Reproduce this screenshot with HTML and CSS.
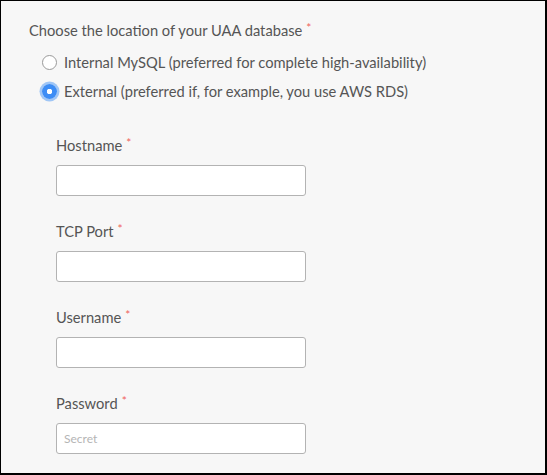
FILE: index.html
```html
<!DOCTYPE html>
<html>
<head>
<meta charset="utf-8">
<link rel="stylesheet" href="styles.css">
</head>
<body>
<div class="frame">
  <div class="group-label">Choose the location of your UAA database<span class="req">*</span></div>
  <div class="radios">
    <label class="radio"><span class="dot"></span><span>Internal MySQL (preferred for complete high-availability)</span></label>
    <label class="radio"><span class="dot checked"></span><span>External (preferred if, for example, you use AWS RDS)</span></label>
  </div>
  <div class="fields">
    <div class="field">
      <div class="label">Hostname<span class="req">*</span></div>
      <div class="input"></div>
    </div>
    <div class="field">
      <div class="label">TCP Port<span class="req">*</span></div>
      <div class="input"></div>
    </div>
    <div class="field">
      <div class="label">Username<span class="req">*</span></div>
      <div class="input"></div>
    </div>
    <div class="field">
      <div class="label">Password<span class="req">*</span></div>
      <div class="input"><span class="placeholder">Secret</span></div>
    </div>
  </div>
</div>
</body>
</html>
```
FILE: styles.css
```css
html, body {
  margin: 0;
  padding: 0;
}
body {
  width: 547px;
  height: 475px;
  font-family: "Lato", "Open Sans", sans-serif;
  color: #555;
}
.frame {
  box-sizing: border-box;
  width: 547px;
  height: 475px;
  background: #f7f7f7;
  border-style: solid;
  border-color: #000;
  border-width: 1px 2px 2px 1px;
  padding: 19px 0 0 28px;
  overflow: hidden;
}
.group-label {
  font-size: 14.7px;
  line-height: 20px;
}
.req {
  color: #f0625c;
  font-size: 12px;
  margin-left: 4px;
  vertical-align: top;
  line-height: 16px;
}
.radios {
  display: flex;
  flex-direction: column;
  gap: 9px;
  margin-top: 12px;
  padding-left: 13px;
}
.radio {
  display: flex;
  align-items: center;
  gap: 7px;
  font-size: 14.7px;
  line-height: 20px;
}
.dot {
  box-sizing: border-box;
  width: 15px;
  height: 15px;
  border-radius: 50%;
  border: 1px solid #9a9a9a;
  background: #fff;
  flex: none;
}
.dot.checked {
  border: none;
  background: radial-gradient(circle, #fff 0 2.5px, #3d8df5 3px);
  box-shadow: 0 0 0 2.5px rgba(72, 150, 245, 0.5);
}
.fields {
  display: flex;
  flex-direction: column;
  gap: 25px;
  margin-top: 34px;
  padding-left: 27px;
}
.field {
  display: flex;
  flex-direction: column;
  gap: 10px;
}
.label {
  font-size: 14.7px;
  line-height: 20px;
}
.input {
  box-sizing: border-box;
  width: 250px;
  height: 31px;
  background: #fff;
  border: 1px solid #b3b3b3;
  border-radius: 3px;
  display: flex;
  align-items: center;
  padding-left: 7px;
}
.placeholder {
  font-size: 12px;
  color: #b5b5b5;
}
```
